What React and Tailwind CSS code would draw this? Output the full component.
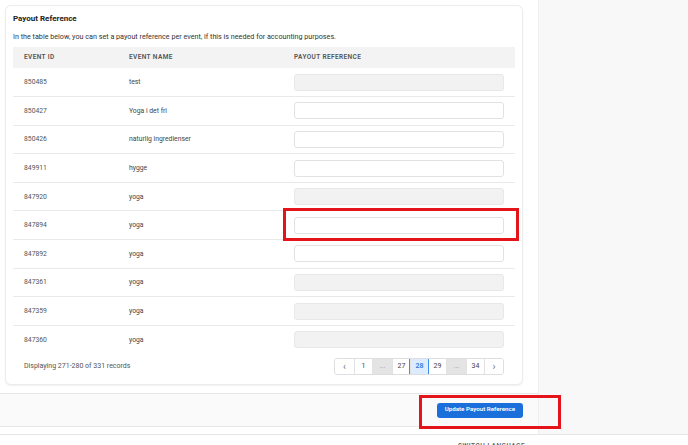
import React from 'react'

const rows = [
  { id: '850485', name: 'test', disabled: true },
  { id: '850427', name: 'Yoga i det fri', disabled: false },
  { id: '850426', name: 'naturlig ingredienser', disabled: false },
  { id: '849911', name: 'hygge', disabled: false },
  { id: '847920', name: 'yoga', disabled: true },
  { id: '847894', name: 'yoga', disabled: false },
  { id: '847892', name: 'yoga', disabled: false },
  { id: '847361', name: 'yoga', disabled: true },
  { id: '847359', name: 'yoga', disabled: true },
  { id: '847360', name: 'yoga', disabled: true },
]

const pages = [
  { label: '‹', kind: 'nav' },
  { label: '1' },
  { label: '...', kind: 'gap' },
  { label: '27' },
  { label: '28', kind: 'active' },
  { label: '29' },
  { label: '...', kind: 'gap' },
  { label: '34' },
  { label: '›', kind: 'nav' },
]

const Pagination = () => (
  <div className="flex h-[17px] rounded-[3px] border border-[#dedede] overflow-hidden">
    {pages.map((p, i) => {
      let cls = 'bg-white text-[#444]'
      if (p.kind === 'gap') cls = 'bg-[#e4e4e4] text-[#999] w-[20px]'
      if (p.kind === 'active') cls = 'bg-[#dcebfd] text-[#2a7be4] font-semibold outline outline-1 outline-[#3d8ff0] z-10'
      if (p.kind === 'nav') cls = 'bg-white text-[#777] text-[10px] w-[19px]'
      return (
        <div
          key={i}
          className={`flex items-center justify-center min-w-[18px] px-[4px] text-[7px] border-l border-[#e2e2e2] first:border-l-0 ${cls}`}
        >
          {p.label}
        </div>
      )
    })}
  </div>
)

const App = () => {
  return (
    <div className="relative w-[688px] h-[445px] overflow-hidden bg-white font-['Roboto',sans-serif]">
      <div className="flex h-[434px]">
        <div className="w-[538px] flex flex-col">
          <div className="pt-[5px] pl-[5px] pr-[15px]">
            <div className="h-[380px] rounded-[6px] border border-[#ececec] shadow-[0_1px_2px_rgba(0,0,0,0.06)] bg-white px-[7px] pt-[8px]">
              <h2 className="text-[8px] font-bold text-[#222] leading-[10px]">Payout Reference</h2>
              <p className="mt-[8px] text-[7.2px] text-[#333] leading-[10px]">
                In the table below, you can set a payout reference per event, if this is needed for accounting purposes.
              </p>
              <table className="mt-[5px] w-full border-collapse">
                <thead>
                  <tr className="bg-[#f3f3f3] h-[21px] text-left">
                    <th className="pl-[11px] w-[116px] text-[6.5px] font-semibold tracking-[0.06em] text-[#555]">EVENT ID</th>
                    <th className="w-[165px] text-[6.5px] font-semibold tracking-[0.06em] text-[#555]">EVENT NAME</th>
                    <th className="text-[6.5px] font-semibold tracking-[0.06em] text-[#555]">PAYOUT REFERENCE</th>
                  </tr>
                </thead>
                <tbody>
                  {rows.map((r, i) => (
                    <tr key={r.id} className={`h-[28.6px] ${i < rows.length - 1 ? 'border-b border-[#e9e9e9]' : ''}`}>
                      <td className="pl-[11px] text-[6.8px] text-[#555]">{r.id}</td>
                      <td className="text-[6.8px] text-[#444]">{r.name}</td>
                      <td className="pr-[11px]">
                        <div
                          className={`h-[17px] rounded-[3px] border ${r.disabled ? 'bg-[#f2f2f2] border-[#e8e8e8]' : 'bg-white border-[#e2e2e2]'}`}
                        />
                      </td>
                    </tr>
                  ))}
                </tbody>
              </table>
              <div className="mt-[4px] flex items-center justify-between pl-[11px] pr-[11px]">
                <span className="text-[7px] text-[#555]">Displaying 271-280 of 331 records</span>
                <Pagination />
              </div>
            </div>
          </div>
          <div className="mt-[8px] h-[34px] bg-[#fafafa] border-t border-b border-[#e6e6e6] flex items-center justify-end pr-[15px]">
            <button className="h-[15px] px-[8px] rounded-[3px] bg-[#1b6fdb] text-white text-[6.2px] font-semibold">
              Update Payout Reference
            </button>
          </div>
        </div>
        <div className="flex-1 bg-[#f8f8f8] border-l border-[#efefef]" />
      </div>
      <div className="border-t border-[#e6e6e6] h-[11px] relative">
        <span className="absolute left-[458px] top-[7px] text-[6.5px] leading-[8px] tracking-[0.08em] font-semibold text-[#666]">SWITCH LANGUAGE</span>
      </div>

      {/* annotation boxes */}
      <div className="absolute left-[283px] top-[208px] w-[236px] h-[33px] border-[3px] border-[#e3151b]" />
      <div className="absolute left-[419px] top-[395px] w-[142px] h-[34px] border-[3px] border-[#e3151b]" />
    </div>
  )
}

export default App
